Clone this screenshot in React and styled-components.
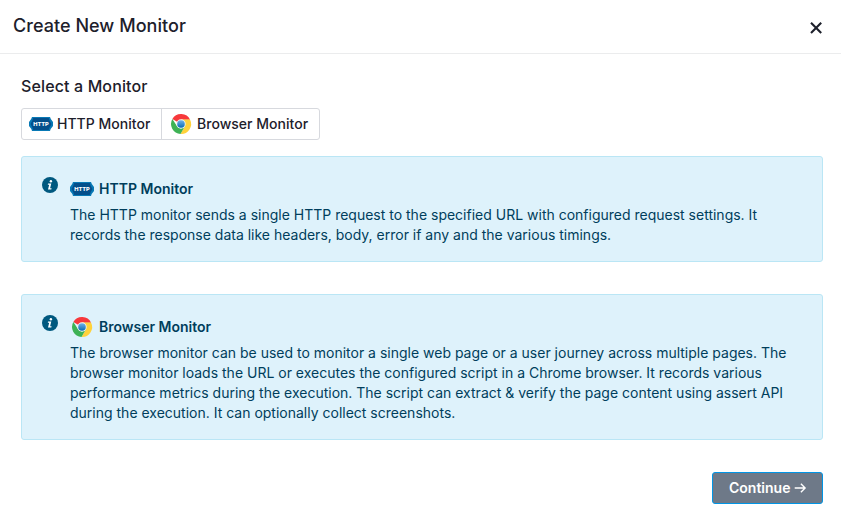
import React from "react";
import styled, { createGlobalStyle } from "styled-components";

const GlobalStyle = createGlobalStyle`
  * { box-sizing: border-box; }
  body { margin: 0; background: #fff; color: #1d202b; font-family: Inter, "Liberation Sans", sans-serif; }
  h1, h2, h3, p { margin: 0; }
  button { font: inherit; color: inherit; margin: 0; }
  svg { display: block; flex: none; }
`;

const Page = styled.main`
  display: flex;
  flex-direction: column;
  height: 525px;
`;
const Header = styled.header`
  display: flex;
  justify-content: space-between;
  height: 54px;
  padding: 14px 18px 0 13px;
  border-bottom: 1px solid #ebeced;
`;
const Title = styled.h1`
  font-size: 18px;
  line-height: 24px;
  font-weight: 500;
  letter-spacing: 0.04px;
`;
const CloseButton = styled.button`
  width: 14px;
  height: 14px;
  margin-top: 7px;
  padding: 0;
  border: 0;
  background: none;
`;
const Content = styled.section`
  padding: 20px 18px 0 21px;
`;
const SectionTitle = styled.h2`
  font-size: 16px;
  line-height: 24px;
  font-weight: 500;
  letter-spacing: 0.13px;
`;
const Tabs = styled.div`
  display: flex;
  width: 299px;
  height: 32px;
  margin-top: 10px;
  border: 1px solid #d7d9de;
  border-radius: 3px;
`;
const Tab = styled.button`
  display: flex;
  align-items: center;
  gap: 4px;
  width: ${(p) => p.$width};
  padding: 0 0 0 7px;
  border: 0;
  background: none;
  font-size: 14px;
  font-weight: 500;
  letter-spacing: 0.02px;
  white-space: nowrap;
  & + & { border-left: 1px solid #d7d9de; }
`;
const Label = styled.span`
  line-height: 20px;
`;
const Notice = styled.article`
  display: flex;
  gap: 12px;
  height: ${(p) => p.$height};
  margin-top: ${(p) => p.$gap};
  padding: 20px 20px 0 20px;
  border: 1px solid #bae6f5;
  border-radius: 3px;
  background: #def2fb;
  color: #003e5c;
`;
const NoticeBody = styled.div`
  flex: 1;
  white-space: nowrap;
`;
const NoticeTitle = styled.h3`
  display: flex;
  align-items: center;
  gap: 5px;
  height: 24px;
  font-size: 14px;
  font-weight: 600;
`;
const NoticeText = styled.p`
  margin-top: 4px;
  font-size: 14px;
  line-height: 20px;
`;
const Footer = styled.footer`
  display: flex;
  justify-content: flex-end;
  margin-top: 32px;
`;
const PrimaryButton = styled.button`
  display: flex;
  align-items: center;
  gap: 4px;
  width: 111px;
  height: 32px;
  padding: 0 0 0 16px;
  border: 1px solid #0095e5;
  border-radius: 3px;
  background: #6e7988;
  color: #fff;
  font-size: 14px;
  font-weight: 600;
`;
const BadgeText = styled.text`
  font-family: Inter, sans-serif;
  font-size: 5.4px;
  font-weight: 800;
  fill: #fff;
`;

const CloseIcon = () => (
  <svg width="14" height="14" viewBox="0 0 14 14">
    <path d="M2 1.8L12.2 12M12.2 1.8L2 12" stroke="#1d202b" strokeWidth="2.1" />
  </svg>
);

const HttpIcon = () => (
  <svg width="24" height="24" viewBox="0 0 24 24">
    <path d="M3 5H21Q21.5 7.4 24 10V14Q21.5 16.6 21 19H3Q2.5 16.6 0 14V10Q2.5 7.4 3 5Z" fill="#0879b5" />
    <path d="M4.3 6H19.7Q20.5 9 22.5 12Q20.5 15 19.7 18H4.3Q3.5 15 1.5 12Q3.5 9 4.3 6Z" fill="#044f8b" />
    <BadgeText x="4.2" y="14" textLength="15.6" lengthAdjust="spacingAndGlyphs">HTTP</BadgeText>
  </svg>
);

const ChromeIcon = () => (
  <svg width="24" height="24" viewBox="0 0 24 24">
    <defs>
      <linearGradient id="hub" x1="0" y1="0" x2="0" y2="1">
        <stop offset="0" stopColor="#72b4e8" />
        <stop offset="1" stopColor="#0869b5" />
      </linearGradient>
    </defs>
    <path d="M12 12L3.34 7A10 10 0 0 1 21.1 7.8H12Z" fill="#f7383b" />
    <path d="M12 7.5H21A10 10 0 0 1 11.5 22L15.9 14.2Z" fill="#ffd23b" />
    <path d="M3.34 7L8.1 14.2L12 16.5L15.9 14.2L11.5 22A10 10 0 0 1 3.34 7Z" fill="#3eb255" />
    <circle cx="12" cy="12" r="4.7" fill="#edf4f5" />
    <circle cx="12" cy="12" r="3.8" fill="url(#hub)" />
  </svg>
);

const InfoIcon = () => (
  <svg width="16" height="16" viewBox="0 0 16 16">
    <circle cx="8" cy="8" r="8" fill="#00597f" />
    <circle cx="8.9" cy="4.2" r="1.2" fill="#fff" />
    <path d="M6 6.5H9.3L8.1 11.3H9.6L9.3 12.5H6L7.2 7.7H5.8Z" fill="#fff" />
  </svg>
);

const ArrowIcon = () => (
  <svg width="13" height="12" viewBox="0 0 13 12">
    <path d="M0.7 6H11.1M6.9 1.8L11.1 6L6.9 10.2" fill="none" stroke="#fff" strokeWidth="1.4" />
  </svg>
);

function MonitorNotice({ icon, title, lines, height, gap }) {
  return (
    <Notice $height={height} $gap={gap}>
      <InfoIcon />
      <NoticeBody>
        <NoticeTitle>{icon}<Label>{title}</Label></NoticeTitle>
        <NoticeText>
          {lines.map((line, i) => (
            <React.Fragment key={line}>{i > 0 && <br />}{line}</React.Fragment>
          ))}
        </NoticeText>
      </NoticeBody>
    </Notice>
  );
}

export default function App() {
  return (
    <Page>
      <GlobalStyle />
      <Header>
        <Title>Create New Monitor</Title>
        <CloseButton aria-label="Close"><CloseIcon /></CloseButton>
      </Header>
      <Content>
        <SectionTitle>Select a Monitor</SectionTitle>
        <Tabs>
          <Tab $width="139px"><HttpIcon /><Label>HTTP Monitor</Label></Tab>
          <Tab $width="158px"><ChromeIcon /><Label>Browser Monitor</Label></Tab>
        </Tabs>
        <MonitorNotice
          height="106px"
          gap="16px"
          icon={<HttpIcon />}
          title="HTTP Monitor"
          lines={[
            "The HTTP monitor sends a single HTTP request to the specified URL with configured request settings. It",
            "records the response data like headers, body, error if any and the various timings.",
          ]}
        />
        <MonitorNotice
          height="146px"
          gap="32px"
          icon={<ChromeIcon />}
          title="Browser Monitor"
          lines={[
            "The browser monitor can be used to monitor a single web page or a user journey across multiple pages. The",
            "browser monitor loads the URL or executes the configured script in a Chrome browser. It records various",
            "performance metrics during the execution. The script can extract & verify the page content using assert API",
            "during the execution. It can optionally collect screenshots.",
          ]}
        />
        <Footer>
          <PrimaryButton><Label>Continue</Label><ArrowIcon /></PrimaryButton>
        </Footer>
      </Content>
    </Page>
  );
}
